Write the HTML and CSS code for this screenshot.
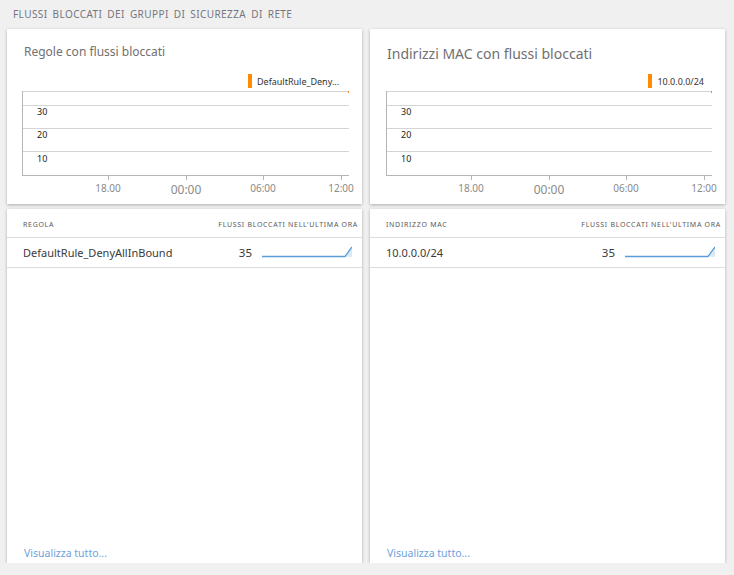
FILE: index.html
```html
<!DOCTYPE html>
<html lang="it">
<head>
<meta charset="utf-8">
<title>Flussi bloccati</title>
<link rel="stylesheet" href="styles.css">
</head>
<body>
<div class="page">
  <h1 class="page-title">FLUSSI BLOCCATI DEI GRUPPI DI SICUREZZA DI RETE</h1>
  <div class="grid">
    <div class="column">
      <section class="card chart-card">
        <h2 class="chart-title">Regole con flussi bloccati</h2>
        <div class="legend"><span class="swatch"></span><span class="legend-text wide">DefaultRule_Deny...</span></div>
        <svg class="chart" width="355" height="110" viewBox="0 0 355 110">
          <g stroke="#d4d4d4" stroke-width="1">
            <line x1="15" y1="1.5" x2="342" y2="1.5"/>
            <line x1="15" y1="15.5" x2="342" y2="15.5"/>
            <line x1="15" y1="38.5" x2="342" y2="38.5"/>
            <line x1="15" y1="61.5" x2="342" y2="61.5"/>
          </g>
          <g stroke="#b5b5b5" stroke-width="1">
            <line x1="15.5" y1="1" x2="15.5" y2="85"/>
            <line x1="15" y1="85.5" x2="342" y2="85.5"/>
            <line x1="101.5" y1="85" x2="101.5" y2="90"/>
            <line x1="179.5" y1="85" x2="179.5" y2="90"/>
            <line x1="256.5" y1="85" x2="256.5" y2="90"/>
            <line x1="334.5" y1="85" x2="334.5" y2="90"/>
          </g>
          <rect x="341" y="1" width="1" height="2" fill="#f58b1f"/>
          <g class="ylab">
            <text x="30" y="25">30</text>
            <text x="30" y="48">20</text>
            <text x="30" y="72">10</text>
          </g>
          <g class="xlab">
            <text x="101" y="102">18.00</text>
            <text x="179" y="104" class="big">00:00</text>
            <text x="256" y="102">06:00</text>
            <text x="334" y="102">12:00</text>
          </g>
        </svg>
      </section>
      <section class="card table-card">
        <div class="thead">
          <span class="th">REGOLA</span>
          <span class="th">FLUSSI BLOCCATI NELL'ULTIMA ORA</span>
        </div>
        <div class="trow">
          <span class="cell-name">DefaultRule_DenyAllInBound</span>
          <span class="cell-value">35</span>
          <svg class="spark" width="90" height="14" viewBox="0 0 90 14">
            <path d="M83 11.5 L90 2 L90 12 Z" fill="#dbe9f7"/>
            <path d="M0 11.5 L83 11.5 L90 2" fill="none" stroke="#5b9bd8" stroke-width="1.3"/>
          </svg>
        </div>
        <a class="view-all" href="#">Visualizza tutto...</a>
      </section>
    </div>
    <div class="column">
      <section class="card chart-card">
        <h2 class="chart-title large">Indirizzi MAC con flussi bloccati</h2>
        <div class="legend"><span class="swatch"></span><span class="legend-text narrow">10.0.0.0/24</span></div>
        <svg class="chart" width="355" height="110" viewBox="0 0 355 110">
          <g stroke="#d4d4d4" stroke-width="1">
            <line x1="16" y1="1.5" x2="342" y2="1.5"/>
            <line x1="16" y1="15.5" x2="342" y2="15.5"/>
            <line x1="16" y1="38.5" x2="342" y2="38.5"/>
            <line x1="16" y1="61.5" x2="342" y2="61.5"/>
          </g>
          <g stroke="#b5b5b5" stroke-width="1">
            <line x1="16.5" y1="1" x2="16.5" y2="85"/>
            <line x1="16" y1="85.5" x2="342" y2="85.5"/>
            <line x1="101.5" y1="85" x2="101.5" y2="90"/>
            <line x1="179.5" y1="85" x2="179.5" y2="90"/>
            <line x1="256.5" y1="85" x2="256.5" y2="90"/>
            <line x1="334.5" y1="85" x2="334.5" y2="90"/>
          </g>
          <rect x="341" y="1" width="1" height="2" fill="#f58b1f"/>
          <g class="ylab">
            <text x="31" y="25">30</text>
            <text x="31" y="48">20</text>
            <text x="31" y="72">10</text>
          </g>
          <g class="xlab">
            <text x="101" y="102">18.00</text>
            <text x="179" y="104" class="big">00:00</text>
            <text x="256" y="102">06:00</text>
            <text x="334" y="102">12:00</text>
          </g>
        </svg>
      </section>
      <section class="card table-card">
        <div class="thead">
          <span class="th">INDIRIZZO MAC</span>
          <span class="th">FLUSSI BLOCCATI NELL'ULTIMA ORA</span>
        </div>
        <div class="trow">
          <span class="cell-name">10.0.0.0/24</span>
          <span class="cell-value">35</span>
          <svg class="spark" width="90" height="14" viewBox="0 0 90 14">
            <path d="M83 11.5 L90 2 L90 12 Z" fill="#dbe9f7"/>
            <path d="M0 11.5 L83 11.5 L90 2" fill="none" stroke="#5b9bd8" stroke-width="1.3"/>
          </svg>
        </div>
        <a class="view-all" href="#">Visualizza tutto...</a>
      </section>
    </div>
  </div>
</div>
</body>
</html>
```

FILE: styles.css
```css
* { box-sizing: border-box; }
html, body {
  margin: 0;
  padding: 0;
  background: #f0f0f0;
  font-family: "Noto Sans", "Open Sans", sans-serif;
  color: #333;
}
.page {
  padding: 7px 9px 0 7px;
}
.page-title {
  margin: 0 0 8px 6px;
  font-size: 10px;
  line-height: 14px;
  font-weight: 400;
  color: #767680;
  letter-spacing: 0.42px;
  word-spacing: 2px;
}
.grid {
  display: grid;
  grid-template-columns: 355px 355px;
  column-gap: 8px;
}
.column {
  display: flex;
  flex-direction: column;
  gap: 5px;
}
.card {
  background: #fff;
  box-shadow: 0 1px 3px rgba(0, 0, 0, 0.28);
}
.chart-card {
  height: 175px;
  padding-top: 15px;
}
.chart-title {
  margin: 0 0 0 17px;
  font-size: 12px;
  line-height: 16px;
  font-weight: 400;
  color: #707070;
}
.chart-title.large {
  font-size: 14px;
  line-height: 20px;
  margin-top: 0;
  margin-bottom: -4px;
}
.legend {
  display: flex;
  justify-content: flex-end;
  align-items: center;
  height: 14px;
  margin-top: 14px;
  padding-right: 17px;
  gap: 5px;
}
.swatch {
  width: 4px;
  height: 14px;
  background: #ff8c00;
}
.legend-text {
  font-size: 9px;
  color: #333;
}
.legend-text.wide { min-width: 88px; }
.legend-text.narrow { padding-right: 4px; }
.chart {
  display: block;
  margin-top: 2px;
}
.ylab text {
  font-size: 9px;
  fill: #222;
}
.xlab text {
  font-size: 10px;
  fill: #8a8a8a;
  text-anchor: middle;
}
.xlab text.big {
  font-size: 12px;
}
.table-card {
  height: 354px;
  display: flex;
  flex-direction: column;
}
.thead {
  height: 29px;
  display: flex;
  align-items: center;
  justify-content: space-between;
  padding: 2px 4px 0 16px;
  border-bottom: 1px solid #dcdcdc;
}
.th {
  font-size: 7px;
  letter-spacing: 0.7px;
  color: #5a5a5a;
}
.trow {
  height: 30px;
  display: flex;
  align-items: center;
  padding: 0 10px 0 16px;
  border-bottom: 1px solid #dcdcdc;
}
.cell-name {
  flex: 1;
  font-size: 11px;
  color: #3a3a3a;
}
.cell-value {
  font-size: 11.5px;
  color: #3a3a3a;
  margin-right: 10px;
}
.spark {
  display: block;
  margin-top: -2px;
}
.view-all {
  margin-top: auto;
  margin-left: 17px;
  margin-bottom: 3px;
  font-size: 10.5px;
  line-height: 14px;
  color: #6f9fdc;
  text-decoration: none;
}
```
